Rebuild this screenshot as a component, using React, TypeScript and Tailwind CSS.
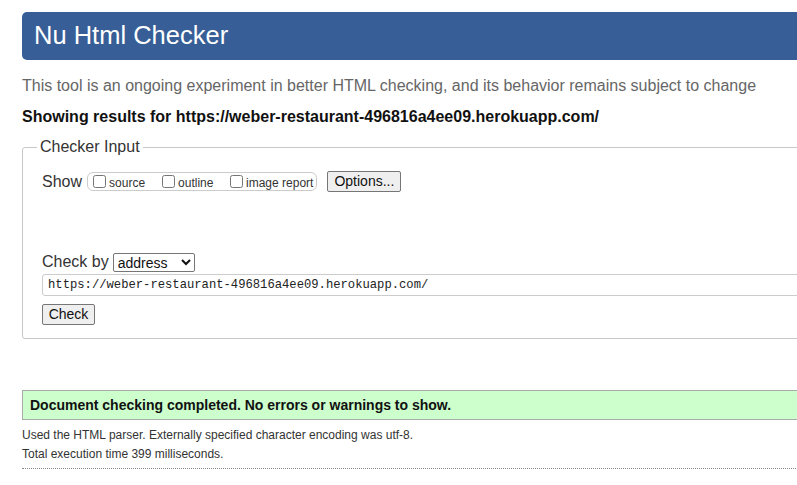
import React from "react";

export default function App() {
  const sans = { fontFamily: '"Liberation Sans", Arial, sans-serif' };
  return (
    <div className="w-[797px] h-[485px] overflow-hidden bg-white" style={sans}>
      <div className="ml-[22px] w-[800px]">
        <div className="mt-[12px] h-[48px] rounded-l-[5px] bg-[#375e96] flex items-center pl-[12px]">
          <h1 className="text-white text-[25.5px] leading-none font-normal">Nu Html Checker</h1>
        </div>
        <p className="mt-[16px] text-[16px] leading-[20px] text-[#666]">
          This tool is an ongoing experiment in better HTML checking, and its behavior remains subject to change
        </p>
        <p className="mt-[11px] text-[16px] leading-[20px] font-bold text-[#111]">
          Showing results for https://weber-restaurant-496816a4ee09.herokuapp.com/
        </p>
        <fieldset className="mt-[11px] border border-[#c8c8c8] rounded-[3px] pl-[19px] pb-[13px]">
          <legend className="-ml-[5px] px-[3px] text-[16px] leading-[18px] text-[#333]">Checker Input</legend>
          <div className="mt-[15px] flex items-center h-[21px] text-[#333]">
            <span className="text-[16px] leading-[20px]">Show</span>
            <div className="ml-[5px] h-[19px] flex items-center border border-[#ccc] rounded-[6px] pl-[5px] pr-[3px]">
              <label className="w-[69px] flex items-center text-[12px] leading-[14px]">
                <input type="checkbox" className="m-0 w-[13px] h-[13px]" />
                <span className="ml-[3px] mt-[3px]">source</span>
              </label>
              <label className="w-[68px] flex items-center text-[12px] leading-[14px]">
                <input type="checkbox" className="m-0 w-[13px] h-[13px]" />
                <span className="ml-[3px] mt-[3px]">outline</span>
              </label>
              <label className="flex items-center text-[12px] leading-[14px]">
                <input type="checkbox" className="m-0 w-[13px] h-[13px]" />
                <span className="ml-[3px] mt-[3px]">image report</span>
              </label>
            </div>
            <button className="ml-[10px] h-[21px] w-[74px] border border-[#767676] rounded-[2px] bg-[#efefef] text-[14px] text-[#111] flex items-center justify-center">
              Options...
            </button>
          </div>
          <div className="mt-[60px] flex items-center h-[20px] text-[#333]">
            <span className="text-[16px] leading-[20px]">Check by</span>
            <select
              className="ml-[4px] h-[19px] w-[82px] border border-[#767676] rounded-[2px] text-[14px] text-[#111] bg-white"
              defaultValue="address"
              style={sans}
            >
              <option value="address">address</option>
            </select>
          </div>
          <div className="mt-[2px] h-[22px] w-[780px] border border-[#ccc] rounded-[3px] flex items-center pl-[5px]">
            <span
              className="text-[12.2px] text-[#222]"
              style={{ fontFamily: '"Liberation Mono", "DejaVu Sans Mono", monospace' }}
            >
              https://weber-restaurant-496816a4ee09.herokuapp.com/
            </span>
          </div>
          <button className="mt-[8px] h-[21px] w-[53px] border border-[#767676] rounded-[2px] bg-[#efefef] text-[14px] text-[#111] flex items-center justify-center">
            Check
          </button>
        </fieldset>
        <div className="mt-[51px] h-[30px] bg-[#ccffcc] border border-[#aaa] flex items-center pl-[7px]">
          <span className="text-[14px] font-bold text-[#111]">
            Document checking completed. No errors or warnings to show.
          </span>
        </div>
        <p className="mt-[6px] text-[12px] leading-[19px] text-[#333]">
          Used the HTML parser. Externally specified character encoding was utf-8.
        </p>
        <p className="text-[12px] leading-[19px] text-[#333]">Total execution time 399 milliseconds.</p>
        <div className="mt-[4px] border-t border-dotted border-[#888]" />
      </div>
    </div>
  );
}
